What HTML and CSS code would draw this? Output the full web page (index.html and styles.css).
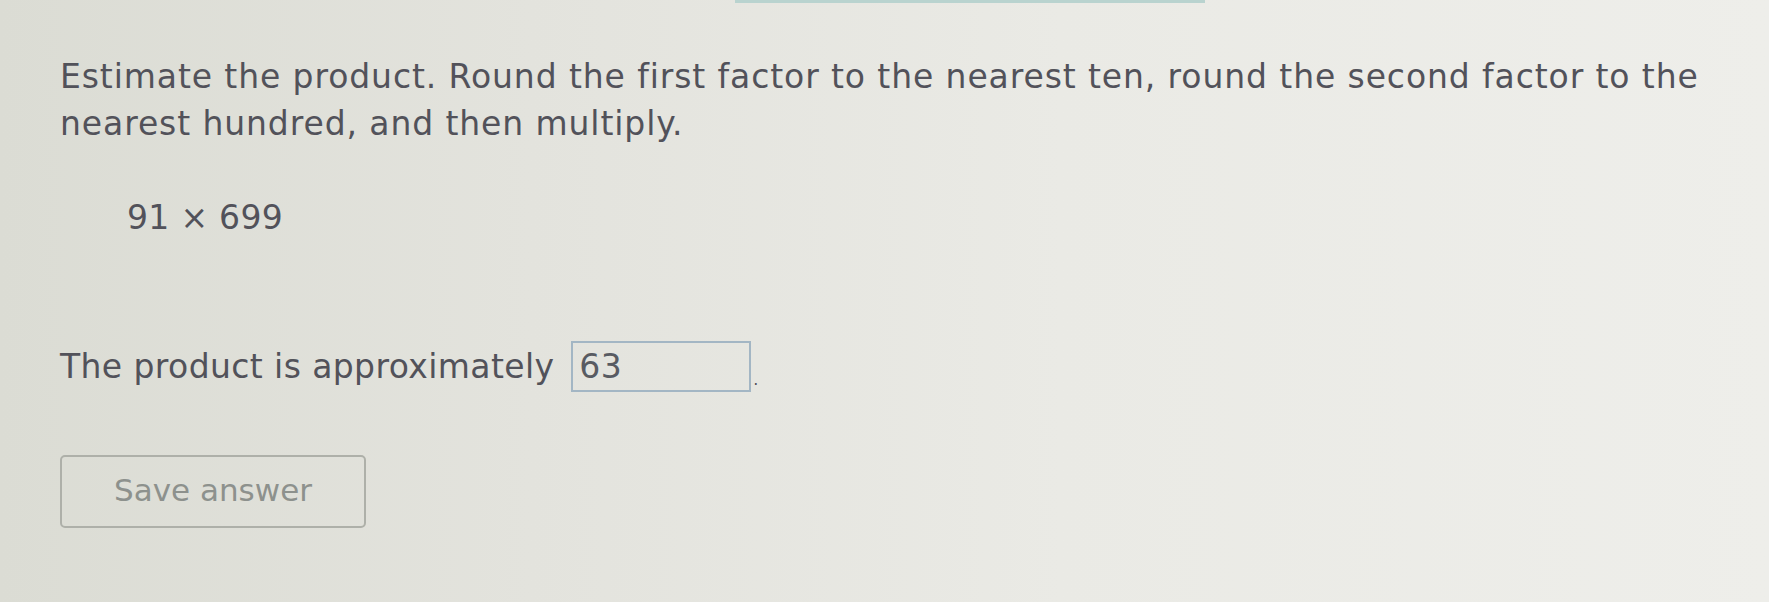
FILE: index.html
```html
<!DOCTYPE html>
<html>
<head>
<meta charset="utf-8">
<link rel="stylesheet" href="styles.css">
</head>
<body>
<div class="page">
  <div class="topline"></div>
  <p class="prompt">Estimate the product. Round the first factor to the nearest ten, round the second factor to the nearest hundred, and then multiply.</p>
  <p class="expr">91 × 699</p>
  <p class="answer">The product is approximately <span class="box">63</span><span class="dot">.</span></p>
  <button class="save">Save answer</button>
</div>
</body>
</html>
```
FILE: styles.css
```css
html, body {
  margin: 0;
  padding: 0;
}
body {
  width: 1769px;
  height: 602px;
  overflow: hidden;
  background: linear-gradient(90deg, #dbdcd4 0%, #e3e3dd 30%, #eaeae5 60%, #eeeeea 100%);
  font-family: "DejaVu Sans", Verdana, sans-serif;
  color: #52525a;
}
.page {
  padding: 0 0 0 60px;
  position: relative;
  height: 602px;
  box-sizing: border-box;
}
.topline {
  position: absolute;
  top: 0;
  left: 735px;
  width: 470px;
  height: 3px;
  background: #b9d3cf;
}
.prompt {
  margin: 0;
  padding-top: 53px;
  width: 1700px;
  font-size: 33px;
  line-height: 47px;
  letter-spacing: 0.9px;
}
.expr {
  margin: 51px 0 0 67px;
  font-size: 33px;
  line-height: 40px;
  letter-spacing: 0.3px;
}
.answer {
  margin: 103px 0 0 0;
  font-size: 33px;
  line-height: 51px;
  letter-spacing: 0.4px;
  display: flex;
  align-items: center;
  white-space: pre;
}
.box {
  display: inline-block;
  width: 180px;
  height: 51px;
  margin-left: 6px;
  border: 2px solid #a3b6c4;
  box-sizing: border-box;
  padding-left: 6px;
  line-height: 47px;
  color: #585b62;
}
.dot {
  align-self: flex-end;
  font-size: 16px;
  line-height: 16px;
  margin-left: 2px;
  margin-bottom: 4px;
}
.save {
  display: block;
  margin-top: 63px;
  width: 306px;
  height: 73px;
  border: 2px solid #aeb0a9;
  border-radius: 5px;
  background: transparent;
  font-family: "DejaVu Sans", Verdana, sans-serif;
  font-size: 31px;
  color: #8d918d;
  padding: 0 0 4px 0;
}
```
